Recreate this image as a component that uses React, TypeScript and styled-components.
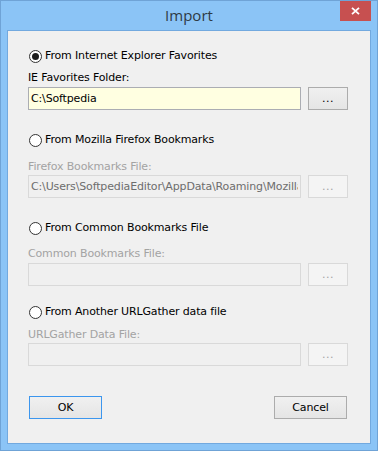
import React from 'react';
import styled, { createGlobalStyle } from 'styled-components';

const GlobalStyle = createGlobalStyle`
    html, body {
        margin: 0;
        padding: 0;
        background: #8bc4f6;
    }
    * {
        box-sizing: border-box;
    }
`;

type Source = {
    title: string;
    label: string;
    value: string;
    checked?: boolean;
    top: number;
    labelGap: number;
    fieldGap: number;
};

const sources: Source[] = [
    { title: 'From Internet Explorer Favorites', label: 'IE Favorites Folder:', value: 'C:\\Softpedia', checked: true, top: 18, labelGap: 8, fieldGap: 2 },
    { title: 'From Mozilla Firefox Bookmarks', label: 'Firefox Bookmarks File:', value: 'C:\\Users\\SoftpediaEditor\\AppData\\Roaming\\Mozilla\\Firefox', top: 23, labelGap: 13, fieldGap: 1 },
    { title: 'From Common Bookmarks File', label: 'Common Bookmarks File:', value: '', top: 23, labelGap: 12, fieldGap: 2 },
    { title: 'From Another URLGather data file', label: 'URLGather Data File:', value: '', top: 19, labelGap: 9, fieldGap: 1 },
];

function CloseGlyph() {
    return (
        <svg width="9" height="8" viewBox="0 0 9 8">
            <path d="M1 0.8 L8 7.2 M8 0.8 L1 7.2" stroke="#fff" strokeWidth="1.8" fill="none" />
        </svg>
    );
}

export default function App(): JSX.Element {
    return (
        <>
            <GlobalStyle />
            <Window>
                <TitleBar>
                    <span />
                    <Title>Import</Title>
                    <CloseButton aria-label="Close">
                        <CloseGlyph />
                    </CloseButton>
                </TitleBar>
                <Client>
                    {sources.map((s) => (
                        <Group key={s.title} $top={s.top}>
                            <RadioRow>
                                <Radio $checked={!!s.checked} />
                                <span>{s.title}</span>
                            </RadioRow>
                            <FieldLabel $gap={s.labelGap} $disabled={!s.checked}>{s.label}</FieldLabel>
                            <FieldRow $gap={s.fieldGap}>
                                <PathInput
                                    readOnly
                                    disabled={!s.checked}
                                    $disabled={!s.checked}
                                    value={s.value}
                                />
                                <BrowseButton $disabled={!s.checked}>...</BrowseButton>
                            </FieldRow>
                        </Group>
                    ))}
                    <Actions>
                        <DialogButton $default>OK</DialogButton>
                        <DialogButton>Cancel</DialogButton>
                    </Actions>
                </Client>
            </Window>
        </>
    );
}

const Window = styled.div`
    width: 378px;
    height: 451px;
    display: flex;
    flex-direction: column;
    padding: 0 6px 6px 6px;
    background: #8bc4f6;
    border: 1px solid #6fa3d6;
`;

const TitleBar = styled.div`
    height: 29px;
    display: grid;
    grid-template-columns: 1fr auto 1fr;
`;

const Title = styled.div`
    align-self: center;
    margin-top: -1px;
    font-family: 'Open Sans', 'Noto Sans', sans-serif;
    font-size: 15px;
    color: #2e3a45;
`;

const CloseButton = styled.div`
    justify-self: end;
    width: 31px;
    height: 20px;
    display: flex;
    align-items: center;
    justify-content: center;
    background: #c75050;
`;

const Client = styled.div`
    flex: 1;
    display: flex;
    flex-direction: column;
    padding: 0 22px 0 20px;
    background: #f0f0f0;
    border: 1px solid #72a9df;
    font-family: 'DejaVu Sans', Tahoma, sans-serif;
    font-size: 11px;
    letter-spacing: -0.15px;
    color: #000;
`;

const Group = styled.div<{ $top: number }>`
    margin-top: ${(p) => p.$top}px;
    display: flex;
    flex-direction: column;
`;

const RadioRow = styled.div`
    height: 14px;
    line-height: 14px;
    display: flex;
    align-items: center;
    gap: 3px;
    white-space: nowrap;
`;

const Radio = styled.span<{ $checked: boolean }>`
    width: 13px;
    height: 13px;
    margin-left: 1px;
    flex: none;
    display: flex;
    align-items: center;
    justify-content: center;
    border-radius: 50%;
    border: 1px solid #333;
    background: #fff;
    &::after {
        content: '';
        display: ${(p) => (p.$checked ? 'block' : 'none')};
        width: 7px;
        height: 7px;
        border-radius: 50%;
        background: #1c1c1c;
    }
`;

const FieldLabel = styled.div<{ $gap: number; $disabled: boolean }>`
    margin-top: ${(p) => p.$gap}px;
    height: 14px;
    line-height: 14px;
    white-space: nowrap;
    color: ${(p) => (p.$disabled ? '#a3a3a3' : '#000')};
`;

const FieldRow = styled.div<{ $gap: number }>`
    margin-top: ${(p) => p.$gap}px;
    display: flex;
    gap: 7px;
`;

const PathInput = styled.input<{ $disabled: boolean }>`
    width: 273px;
    height: 23px;
    margin: 0;
    padding: 0 2px;
    font: inherit;
    letter-spacing: inherit;
    outline: none;
    border: 1px solid ${(p) => (p.$disabled ? '#d9d9d9' : '#abadb3')};
    background: ${(p) => (p.$disabled ? '#f0f0f0' : '#ffffe1')};
    color: ${(p) => (p.$disabled ? '#6d6d6d' : '#000')};
    -webkit-text-fill-color: ${(p) => (p.$disabled ? '#6d6d6d' : '#000')};
    opacity: 1;
`;

const BrowseButton = styled.div<{ $disabled: boolean }>`
    width: 40px;
    height: 23px;
    display: flex;
    align-items: center;
    justify-content: center;
    padding-bottom: 1px;
    letter-spacing: 0.5px;
    border: 1px solid ${(p) => (p.$disabled ? '#d9d9d9' : '#acacac')};
    background: ${(p) => (p.$disabled ? '#f4f4f4' : 'linear-gradient(#f0f0f0, #e5e5e5)')};
    color: ${(p) => (p.$disabled ? '#a3a3a3' : '#000')};
`;

const Actions = styled.div`
    margin-top: 30px;
    padding: 0 1px;
    display: flex;
    justify-content: space-between;
`;

const DialogButton = styled.div<{ $default?: boolean }>`
    width: 73px;
    height: 23px;
    display: flex;
    align-items: center;
    justify-content: center;
    border: 1px solid ${(p) => (p.$default ? '#3c96ee' : '#acacac')};
    background: linear-gradient(#f0f0f0, #e5e5e5);
`;
